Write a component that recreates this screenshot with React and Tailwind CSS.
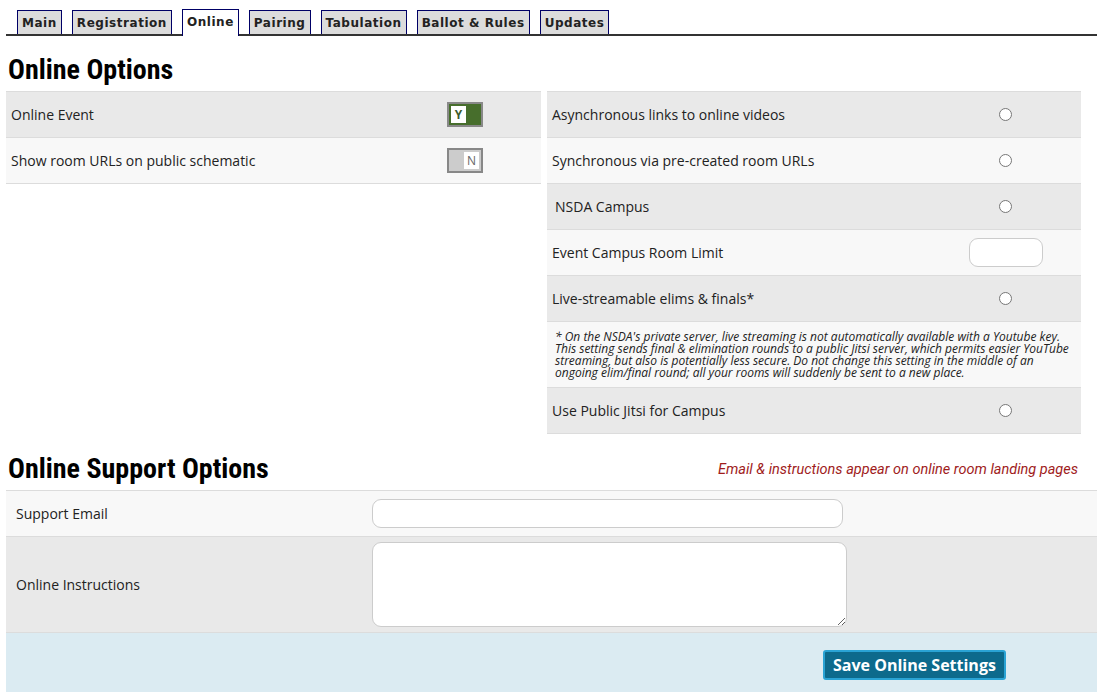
import React from "react";

const tabs = ["Main", "Registration", "Online", "Pairing", "Tabulation", "Ballot & Rules", "Updates"];

const Toggle = ({ on }) => (
  <div
    className={`flex w-[36px] h-[25px] border-2 border-[#888] p-[2px] ${
      on ? "bg-[#476e2c] justify-start" : "bg-[#cccccc] justify-end"
    }`}
  >
    <div className="w-[15px] h-full bg-white flex items-center justify-center text-[12px] font-bold text-[#555] leading-none">
      {on ? <span className="text-[#3d5a2a]">Y</span> : <span className="font-normal text-[#666]">N</span>}
    </div>
  </div>
);

const Radio = () => (
  <div className="w-[13px] h-[13px] rounded-full border border-[#777] bg-white" />
);

const Row = ({ label, odd, children, indent }) => (
  <div
    className={`flex items-center h-[46px] border-b border-[#dcdcdc] ${
      odd ? "bg-[#e9e9e9]" : "bg-[#f8f8f8]"
    }`}
  >
    <div className={`flex-1 ${indent ? "pl-[8px]" : "pl-[5px]"}`}>{label}</div>
    {children}
  </div>
);

export default function App() {
  return (
    <div
      className="min-h-screen bg-white text-[#222] text-[14px]"
      style={{ fontFamily: '"Open Sans", "Noto Sans", sans-serif' }}
    >
      {/* Tabs */}
      <div className="pt-[9px] pl-[6px] pr-[8px]">
        <div className="flex items-end gap-[10px] pl-[11px] border-b-2 border-[#333] h-[27px]">
          {tabs.map((t) => (
            <div
              key={t}
              className={`px-[4px] border border-b-0 border-[#000066] text-[12px] font-bold tracking-[0.045em] leading-none flex items-center ${
                t === "Online" ? "bg-white h-[27px] -mb-[2px] pb-[2px]" : "bg-[#dcdcdc] h-[24px]"
              }`}
              style={{ fontFamily: '"DejaVu Sans", sans-serif' }}
            >
              {t}
            </div>
          ))}
        </div>
      </div>

      <div className="pl-[6px] pr-[8px]">
        <h2
          className="text-[28px] font-bold text-black pl-[2px] pt-[18px] pb-[5px] leading-[32px]"
          style={{ fontFamily: '"Liberation Sans Narrow", "Roboto Condensed", Roboto, sans-serif' }}
        >
          Online Options
        </h2>

        <div className="flex gap-[6px]">
          {/* Left */}
          <div className="w-[535px] self-start border-t border-[#dcdcdc]">
            <Row label="Online Event" odd>
              <div className="w-[94px]"><Toggle on /></div>
            </Row>
            <Row label="Show room URLs on public schematic">
              <div className="w-[94px]"><Toggle /></div>
            </Row>
          </div>

          {/* Right */}
          <div className="w-[534px] border-t border-[#dcdcdc]">
            <Row label="Asynchronous links to online videos" odd>
              <div className="w-[82px]"><Radio /></div>
            </Row>
            <Row label="Synchronous via pre-created room URLs">
              <div className="w-[82px]"><Radio /></div>
            </Row>
            <Row label="NSDA Campus" odd indent>
              <div className="w-[82px]"><Radio /></div>
            </Row>
            <Row label="Event Campus Room Limit">
              <div className="w-[112px]">
                <div className="w-[74px] h-[29px] rounded-[9px] border border-[#cccccc] bg-white" />
              </div>
            </Row>
            <Row label="Live-streamable elims & finals*" odd>
              <div className="w-[82px]"><Radio /></div>
            </Row>
            <div className="bg-[#f8f8f8] border-b border-[#dcdcdc] h-[66px] px-[8px] pt-[9px] text-[12px] italic leading-[12px] text-[#222]">
              * On the NSDA's private server, live streaming is not automatically available with a Youtube key. This
              setting sends final &amp; elimination rounds to a public Jitsi server, which permits easier YouTube
              streaming, but also is potentially less secure. Do not change this setting in the middle of an ongoing
              elim/final round; all your rooms will suddenly be sent to a new place.
            </div>
            <Row label="Use Public Jitsi for Campus" odd>
              <div className="w-[82px]"><Radio /></div>
            </Row>
          </div>
        </div>

        {/* Support */}
        <div className="flex items-end justify-between pt-[19px] pb-[5px]">
          <h2
            className="text-[28px] font-bold text-black pl-[2px] leading-[32px]"
            style={{ fontFamily: '"Liberation Sans Narrow", "Roboto Condensed", Roboto, sans-serif' }}
          >
            Online Support Options
          </h2>
          <div
            className="text-[14.5px] italic text-[#a01c1c] pr-[19px] pb-[4px]"
            style={{ fontFamily: '"Liberation Sans Narrow", Roboto, sans-serif' }}
          >
            Email &amp; instructions appear on online room landing pages
          </div>
        </div>

        <div className="border-t border-[#dcdcdc]">
          <div className="flex items-center h-[46px] bg-[#f8f8f8] border-b border-[#dcdcdc]">
            <div className="w-[366px] pl-[10px]">Support Email</div>
            <div className="w-[471px] h-[29px] rounded-[9px] border border-[#cccccc] bg-white" />
          </div>
          <div className="flex items-center h-[96px] bg-[#e9e9e9] border-b border-[#dcdcdc]">
            <div className="w-[366px] pl-[10px]">Online Instructions</div>
            <textarea className="w-[475px] h-[85px] rounded-[9px] border border-[#cccccc] bg-white resize-y" />
          </div>
          <div className="flex items-start pt-[17px] h-[60px] bg-[#dbebf2]">
            <div className="w-[817px]" />
            <button
              className="h-[30px] px-[8px] bg-[#0d6a8c] border-2 border-[#2aa3d4] rounded-[3px] text-white text-[16px] font-bold"
              style={{ fontFamily: '"Open Sans", sans-serif' }}
            >
              Save Online Settings
            </button>
          </div>
        </div>
      </div>
    </div>
  );
}
